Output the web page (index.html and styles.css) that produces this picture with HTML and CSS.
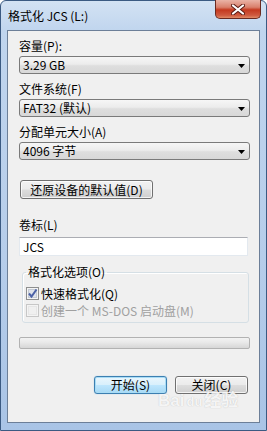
FILE: index.html
```html
<!DOCTYPE html>
<html lang="zh">
<head>
<meta charset="utf-8">
<title>格式化 JCS (L:)</title>
<link rel="stylesheet" href="styles.css">
</head>
<body>
<div class="window">
  <div class="titlebar">
    <span class="title">格式化 JCS (L:)</span>
    <div class="close">
      <svg width="14" height="11" viewBox="0 0 14 11"><path d="M2 1.5 L12 9.5 M12 1.5 L2 9.5" stroke="#5a1a12" stroke-width="4" stroke-linecap="round"/><path d="M2 1.5 L12 9.5 M12 1.5 L2 9.5" stroke="#ffffff" stroke-width="2.2" stroke-linecap="round"/></svg>
    </div>
  </div>
  <div class="client">
    <div class="label">容量(P):</div>
    <div class="combo"><span>3.29 GB</span><svg class="arrow" width="7" height="4" viewBox="0 0 7 4"><path d="M0 0 H7 L3.5 4 Z" fill="#000"/></svg></div>
    <div class="label gap">文件系统(F)</div>
    <div class="combo"><span>FAT32 (默认)</span><svg class="arrow" width="7" height="4" viewBox="0 0 7 4"><path d="M0 0 H7 L3.5 4 Z" fill="#000"/></svg></div>
    <div class="label gap">分配单元大小(A)</div>
    <div class="combo"><span>4096 字节</span><svg class="arrow" width="7" height="4" viewBox="0 0 7 4"><path d="M0 0 H7 L3.5 4 Z" fill="#000"/></svg></div>
    <div class="btn restore">还原设备的默认值(D)</div>
    <div class="label vol">卷标(L)</div>
    <div class="textbox">JCS</div>
    <fieldset class="group">
      <legend>格式化选项(O)</legend>
      <div class="check">
        <svg width="13" height="13" viewBox="0 0 13 13"><rect x="0.5" y="0.5" width="12" height="12" fill="#f4f4f4" stroke="#8e8f8f"/><rect x="2.5" y="2.5" width="8" height="8" fill="#dfe3ea" stroke="#c4cad4"/><path d="M3 6.5 L5.5 9.5 L10.5 2.5" fill="none" stroke="#4b61a6" stroke-width="2"/></svg>
        <span>快速格式化(Q)</span>
      </div>
      <div class="check disabled">
        <svg width="13" height="13" viewBox="0 0 13 13"><rect x="0.5" y="0.5" width="12" height="12" fill="#f4f4f4" stroke="#c7c7c7"/><rect x="2.5" y="2.5" width="8" height="8" fill="#f0f0f0" stroke="#e6e6e6"/></svg>
        <span>创建一个 MS-DOS 启动盘(M)</span>
      </div>
    </fieldset>
    <div class="progress"></div>
    <div class="actions">
      <div class="btn default">开始(S)</div>
      <div class="btn">关闭(C)</div>
    </div>
    <div class="watermark">Bai<span class="paw">du</span>经验</div>
  </div>
</div>
</body>
</html>
```
FILE: styles.css
```css
html, body {
  margin: 0;
  padding: 0;
  background: #ffffff;
}

body {
  width: 267px;
  height: 431px;
  overflow: hidden;
  font-family: "Noto Sans CJK SC", "DejaVu Sans", sans-serif;
  font-size: 12px;
  color: #000;
}

.window {
  width: 267px;
  height: 431px;
  box-sizing: border-box;
  border: 1px solid #3b5a82;
  border-radius: 6px 6px 0 0;
  padding: 0 6px 7px 6px;
  display: flex;
  flex-direction: column;
  background: linear-gradient(180deg, #d3e2f3 0px, #c0d5ee 30px, #b6cdea 60%, #a9c4e6 100%);
  position: relative;
}

.titlebar {
  height: 29px;
  display: flex;
  align-items: center;
  justify-content: space-between;
  padding-left: 1px;
}

.title {
  font-size: 12px;
  line-height: 14px;
  color: #000;
  margin-top: 1px;
}

.close {
  align-self: flex-start;
  margin-top: -1px;
  margin-right: -1px;
  width: 46px;
  height: 19px;
  box-sizing: border-box;
  border: 1px solid #6a2a20;
  border-top: none;
  border-radius: 0 0 5px 5px;
  background: linear-gradient(180deg, #eab3a6 0%, #d9806c 40%, #c4391f 55%, #cf5a3f 85%, #e08b66 100%);
  display: flex;
  align-items: center;
  justify-content: center;
}

.client {
  flex: 1;
  position: relative;
  border: 1px solid #6c7f98;
  background: #f0f0f0;
  padding: 8px 9px 0 11px;
  display: flex;
  flex-direction: column;
  align-items: stretch;
}

.label {
  line-height: 14px;
  height: 14px;
  margin-bottom: 3px;
  white-space: nowrap;
}

.label.gap {
  margin-top: 8px;
}

.combo {
  height: 18px;
  box-sizing: border-box;
  border: 1px solid #7a7a7a;
  border-radius: 3px;
  background: linear-gradient(180deg, #f6f6f6 0%, #ececec 45%, #dedede 55%, #d8d8d8 100%);
  display: flex;
  align-items: center;
  justify-content: space-between;
  padding: 0 4px 0 3px;
  line-height: 14px;
  white-space: nowrap;
}

.arrow {
  flex: none;
  margin-top: 1px;
}

.btn {
  height: 19px;
  box-sizing: border-box;
  border: 1px solid #707070;
  border-radius: 3px;
  background: linear-gradient(180deg, #f2f2f2 0%, #ebebeb 48%, #dddddd 52%, #cfcfcf 100%);
  box-shadow: inset 0 0 0 1px rgba(255,255,255,0.75);
  display: flex;
  align-items: center;
  justify-content: center;
  line-height: 14px;
  white-space: nowrap;
}

.restore {
  margin-top: 20px;
  width: 133px;
  margin-left: 1px;
}

.label.vol {
  margin-top: 19px;
  margin-bottom: 5px;
}

.textbox {
  height: 19px;
  box-sizing: border-box;
  background: #ffffff;
  border: 1px solid #e3e9ef;
  border-top-color: #abadb3;
  padding: 0 3px;
  display: flex;
  align-items: center;
  line-height: 14px;
  width: 229px;
}

.group {
  margin: 9px 1px 0 3px;
  padding: 6px 4px 3px 3px;
  border: 1px solid #d5dfe5;
  border-radius: 3px;
  box-shadow: inset 1px 1px 0 #ffffff;
  min-width: 0;
}

.group legend {
  padding: 0 2px;
  line-height: 14px;
}

.check {
  height: 17px;
  display: flex;
  align-items: center;
  gap: 2px;
  white-space: nowrap;
  line-height: 14px;
}

.check svg {
  flex: none;
}

.check.disabled {
  color: #a0a0a0;
}

.progress {
  margin-top: 14px;
  height: 12px;
  box-sizing: border-box;
  border: 1px solid #b2b2b2;
  border-radius: 2px;
  background: linear-gradient(180deg, #f3f3f3 0%, #e7e7e7 50%, #d6d6d6 100%);
}

.actions {
  margin-top: 27px;
  margin-right: 2px;
  display: flex;
  justify-content: flex-end;
  gap: 8px;
}

.actions .btn {
  width: 73px;
  height: 18px;
}

.btn.default {
  border-color: #3c7fb1;
  box-shadow: inset 0 0 0 1px #a9dcf5, 0 0 1px #74b8e4;
  background: linear-gradient(180deg, #eaf6fd 0%, #d9f0fc 48%, #bee6fd 52%, #a7d9f5 100%);
}

.watermark {
  position: absolute;
  left: 150px;
  top: 360px;
  font-family: "Liberation Sans", "Noto Sans CJK SC", sans-serif;
  font-size: 17px;
  line-height: 20px;
  font-weight: bold;
  color: rgba(255, 255, 255, 0.85);
  text-shadow: 0 0 1px rgba(150, 150, 150, 0.6);
  white-space: nowrap;
  letter-spacing: 0;
}

.watermark .paw {
  font-size: 13px;
  margin: 0 2px;
}
```
